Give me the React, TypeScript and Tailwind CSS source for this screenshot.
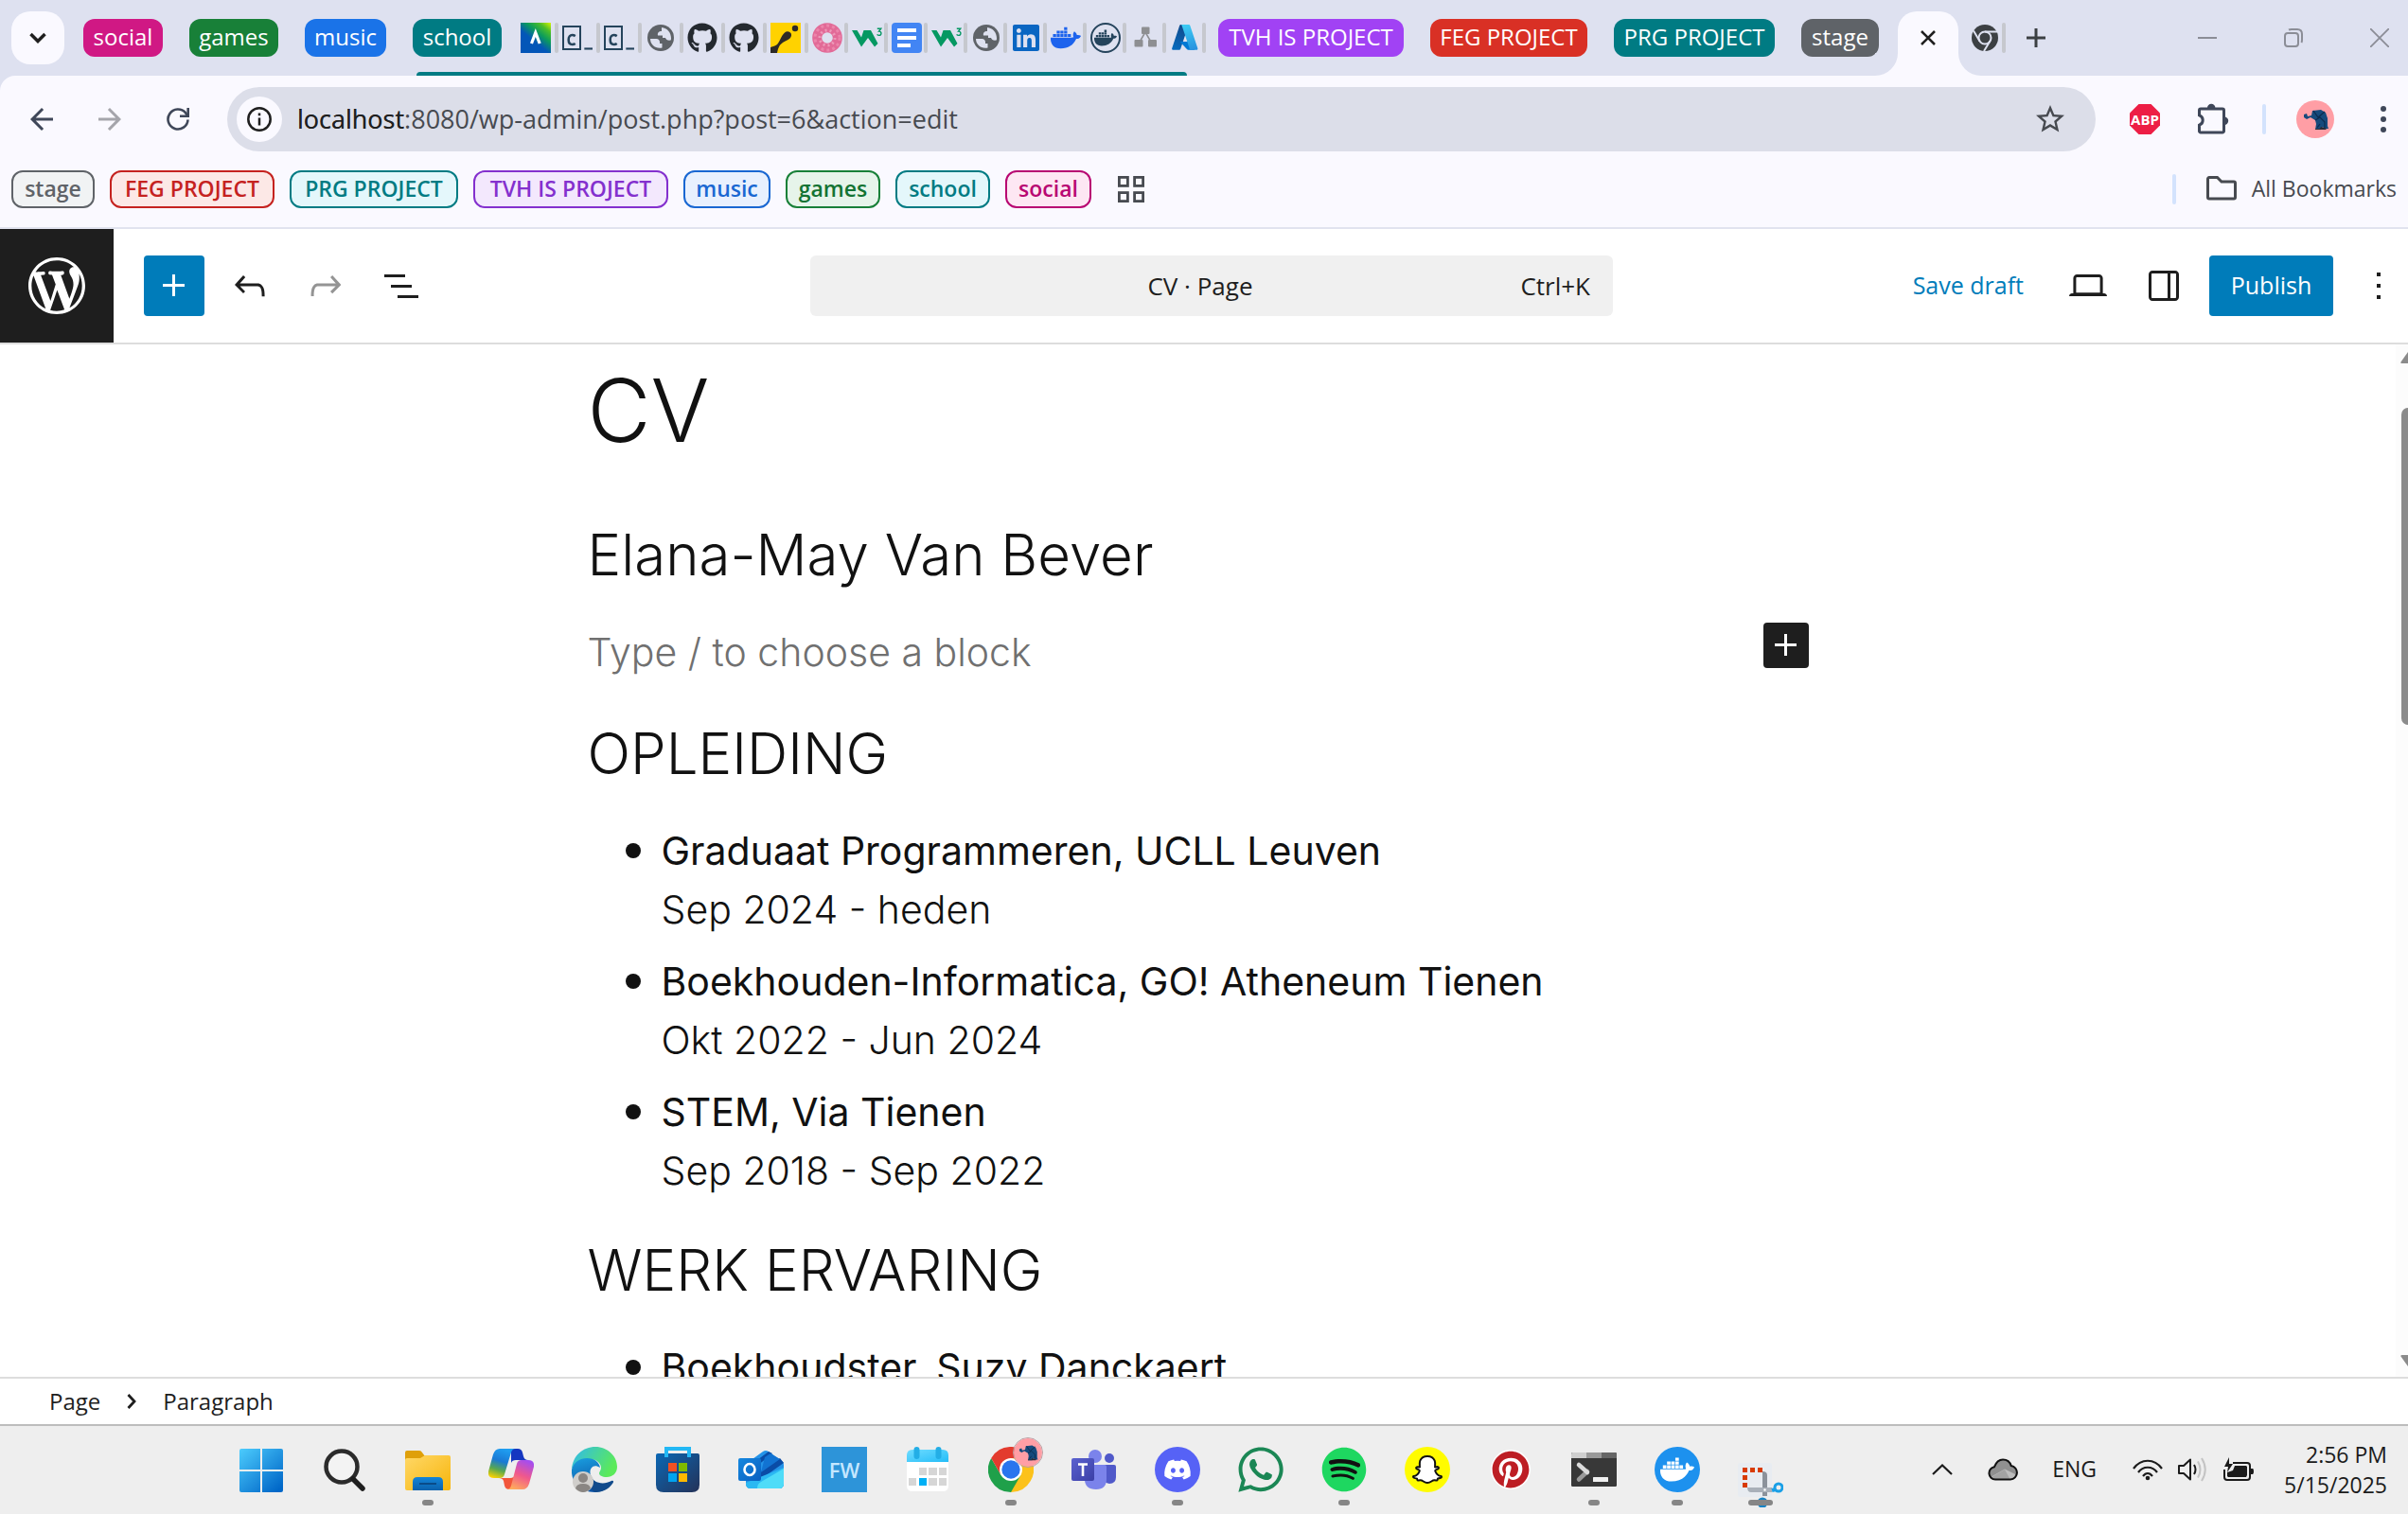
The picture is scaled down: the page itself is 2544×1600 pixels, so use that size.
import React from "react";
import { FaGithub, FaLinkedin, FaDocker, FaDiscord, FaWhatsapp, FaSpotify, FaPinterest, FaSnapchatGhost } from "react-icons/fa";
import { MdArrowBack, MdArrowForward, MdStarBorder } from "react-icons/md";

type SvgProps = { d: string; className?: string };

const WP = {
  undo: "M18.3 11.7c-.6-.6-1.4-.9-2.3-.9H6.7l2.9-3.3-1.1-1-4.5 5L8.5 16l1-1-2.7-2.7H16c.5 0 .9.2 1.3.5 1 1 1 3.4 1 4.5v.3h1.5v-.2c0-1.5 0-4.3-1.5-5.7z",
  redo: "M15.6 6.5l-1.1 1 2.9 3.3H8c-.9 0-1.7.3-2.3.9-1.4 1.5-1.4 4.2-1.4 5.6v.2h1.5v-.3c0-1.1 0-3.5 1-4.5.3-.3.7-.5 1.3-.5h9.2L14.5 15l1.1 1.1 4.6-4.6-4.6-5z",
  list: "M3 6h11v1.5H3V6Zm3.5 5.5h11V13h-11v-1.5ZM21 17H10v1.5h11V17Z",
  desktop: "M20.5 16h-.7V8c0-1.1-.9-2-2-2H6.2c-1.1 0-2 .9-2 2v8h-.7c-.8 0-1.5.7-1.5 1.5h20c0-.8-.7-1.5-1.5-1.5zM5.7 8c0-.3.2-.5.5-.5h11.6c.3 0 .5.2.5.5v7.6H5.7V8z",
  drawer: "M18 4H6c-1.1 0-2 .9-2 2v12c0 1.1.9 2 2 2h12c1.1 0 2-.9 2-2V6c0-1.1-.9-2-2-2zm-4 14.5H6c-.3 0-.5-.2-.5-.5V6c0-.3.2-.5.5-.5h8v13zm4.5-.5c0 .3-.2.5-.5.5h-2.5v-13H18c.3 0 .5.2.5.5v12z",
  more: "M13 19h-2v-2h2v2zm0-6h-2v-2h2v2zm0-6h-2V5h2v2z",
  plus: "M11 12.5V17.5H12.5V12.5H17.5V11H12.5V6H11V11H6V12.5H11Z",
  logo: "M20 10c0-5.51-4.49-10-10-10C4.48 0 0 4.49 0 10c0 5.52 4.48 10 10 10 5.51 0 10-4.48 10-10zM7.78 15.37L4.37 6.22c.55-.02 1.17-.08 1.17-.08.5-.06.44-1.13-.06-1.11 0 0-1.45.11-2.37.11-.18 0-.37 0-.58-.01C4.12 2.69 6.87 1.11 10 1.11c2.33 0 4.45.87 6.05 2.34-.68-.11-1.65.39-1.65 1.58 0 .74.45 1.36.9 2.1.35.61.55 1.36.55 2.46 0 1.49-1.4 5-1.4 5l-3.03-8.37c.54-.02.82-.17.82-.17.5-.05.44-1.25-.06-1.22 0 0-1.44.12-2.38.12-.87 0-2.33-.12-2.33-.12-.5-.03-.56 1.2-.06 1.22l.92.08 1.26 3.41zM17.41 10c.24-.64.74-1.87.43-4.25.7 1.29 1.05 2.71 1.05 4.25 0 3.29-1.73 6.24-4.4 7.78.97-2.59 1.94-5.2 2.92-7.78zM6.1 18.09C3.12 16.65 1.11 13.53 1.11 10c0-1.3.23-2.48.72-3.59C3.25 10.3 4.67 14.2 6.1 18.09zm4.03-6.63l2.58 6.98c-.86.29-1.76.45-2.71.45-.79 0-1.57-.11-2.29-.33.81-2.38 1.62-4.74 2.42-7.1z",
};

function WpIcon({ d, className = "" }: SvgProps) {
  return (
    <svg viewBox="0 0 24 24" className={`size-12 fill-current ${className}`} aria-hidden="true">
      <path d={d} />
    </svg>
  );
}

/* ---------- favicons ---------- */

function CodeFavicon() {
  return (
    <svg viewBox="0 0 24 24" className="size-8" fill="none" stroke="#25445c">
      <rect x="0.75" y="3" width="13.5" height="18" strokeWidth="1.5" />
      <path d="M10.3 10.6C9.5 10 8.8 9.8 7.9 9.8 6.3 9.8 5 11.200 5 13.500s1.200 3.700 2.900 3.700c1 0 1.700-.2 2.400-.7" strokeWidth="1.900" />
      <path d="M17.500 20.600h6.500" strokeWidth="1.600" />
    </svg>
  );
}

function CombellFavicon() {
  return (
    <svg viewBox="0 0 32 32" className="size-8">
      <defs>
        <linearGradient id="cfv" x1="1" y1="0" x2="0.350" y2="0.800">
          <stop offset="0" stopColor="#d8f500" />
          <stop offset="0.250" stopColor="#4bbd2a" />
          <stop offset="0.500" stopColor="#0c9c5c" />
          <stop offset="0.800" stopColor="#0356b8" />
        </linearGradient>
      </defs>
      <rect width="32" height="32" fill="url(#cfv)" />
      <path d="M11.500 22 15.800 10.500 20.200 22" fill="none" stroke="#fff" strokeWidth="3.200" />
    </svg>
  );
}

function Globe() {
  return (
    <svg viewBox="0 0 32 32" className="size-8">
      <circle cx="16" cy="16" r="14" fill="#5f6368" />
      <path d="M5 17h6.500c2 0 3.500 1.500 3.500 3.500V22h2.500v4.500C11 28 5 23.500 5 17z" fill="#dee1f0" />
      <path d="M17 5c6 .5 10 5.500 10 11.500 0 1-.1 1.500-.3 2-3 .5-5.200-.5-5.700-2.500h-3v-2.500h-5c-.6-2.500.8-4.500 4-4.500V7z" fill="#dee1f0" />
    </svg>
  );
}

function YellowFavicon() {
  return (
    <svg viewBox="0 0 32 32" className="size-8">
      <rect width="32" height="32" fill="#ffd200" />
      <circle cx="26" cy="6" r="3.200" fill="#2d2a26" />
      <path d="M0 32v-6c3-1.500 5-1 7-3 3-3 4-9 8-12.500 3-2.500 6-.5 6.800 1 .9 2-.3 5-3.300 6.500-4 2-7.500 3.500-9.500 7.500-1 2-1.500 4-2 6.500z" fill="#2d2a26" />
    </svg>
  );
}

function DonutFavicon() {
  return (
    <svg viewBox="0 0 32 32" className="size-8" fill="none">
      <circle cx="16" cy="16" r="10.800" stroke="#e26a97" strokeWidth="10" />
      <circle cx="16" cy="16" r="13" stroke="#ec85ab" strokeWidth="3" strokeDasharray="3 3" />
      <circle cx="16" cy="16" r="8" stroke="#ee9ab9" strokeWidth="3" strokeDasharray="2 3" />
    </svg>
  );
}

function W3Favicon() {
  return (
    <svg viewBox="0 0 32 32" className="size-8">
      <path d="M0 8h5.500l4.500 7.500L12.500 8H20l7.500 14-3.500 3.500L17 16l-7 9.500z" fill="#059862" />
      <path d="M26.800 6.200h4l-2.300 2.900c3.200 0 3.200 4.300.3 4.300-1 0-1.700-.4-2.200-1.100" fill="none" stroke="#059862" strokeWidth="1.400" />
    </svg>
  );
}

function DocsFavicon() {
  return (
    <svg viewBox="0 0 32 32" className="size-8">
      <rect width="32" height="32" rx="4" fill="#4285f4" />
      <path d="M6 8h20M6 16h20M6 24h14" stroke="#fff" strokeWidth="4" />
    </svg>
  );
}

function RoundDocker() {
  return (
    <span className="flex size-8 items-center justify-center rounded-full border-2 border-[#25445c] text-[#25445c]">
      <FaDocker className="size-6" />
    </span>
  );
}

function NodesFavicon() {
  return (
    <svg viewBox="0 0 32 32" className="size-8" fill="#8e8f92">
      <path d="M16 10 9 22M16 10l7 12" stroke="#8e8f92" strokeWidth="1.500" />
      <rect x="12" y="4.500" width="8.500" height="7.500" rx="1" />
      <rect x="4.500" y="18" width="9" height="7.500" rx="1" />
      <rect x="19" y="18" width="9" height="7.500" rx="1" />
    </svg>
  );
}

function AzureFavicon() {
  return (
    <svg viewBox="0 0 32 32" className="size-8">
      <defs>
        <linearGradient id="az1" x1="0.600" y1="0" x2="0.300" y2="1">
          <stop offset="0" stopColor="#114a8b" />
          <stop offset="1" stopColor="#0669bc" />
        </linearGradient>
        <linearGradient id="az2" x1="0.400" y1="0" x2="0.600" y2="1">
          <stop offset="0" stopColor="#3ccbf4" />
          <stop offset="1" stopColor="#2892df" />
        </linearGradient>
      </defs>
      <path d="M11.500 2h8.300l-8.600 25.800c-.2.600-.7 1-1.300 1H3.500c-1 0-1.700-1-1.300-1.900L10.200 3c.2-.6.700-1 1.300-1z" fill="url(#az1)" />
      <path d="M23 20H10.500l7.700 8.200c.3.300.7.500 1.100.5h6.800z" fill="#0078d4" />
      <path d="M21.300 3c-.2-.6-.7-1-1.300-1h-8.700c.6 0 1.100.4 1.300 1l8 23.900c.3.900-.3 1.900-1.300 1.900H28c1 0 1.600-1 1.300-1.900z" fill="url(#az2)" />
    </svg>
  );
}

/* ---------- browser chrome ---------- */

const groupsLeft = [
  { label: "social", cls: "w-[84px] bg-[#d01884]" },
  { label: "games", cls: "w-[94px] bg-[#188038]" },
  { label: "music", cls: "w-[86px] bg-[#1a73e8]" },
];
const groupsRight = [
  { label: "TVH IS PROJECT", cls: "w-[196px] bg-[#a142f4]" },
  { label: "FEG PROJECT", cls: "w-[166px] bg-[#d93025]" },
  { label: "PRG PROJECT", cls: "w-[170px] bg-[#007b83]" },
  { label: "stage", cls: "w-[82px] bg-[#5f6368]" },
];

function GroupPill({ label, cls }: { label: string; cls: string }) {
  return (
    <button className={`h-10 shrink-0 rounded-xl pb-0.5 text-2xl leading-9 whitespace-nowrap text-white ${cls}`}>{label}</button>
  );
}

const wideTabs: [string, React.ReactNode][] = [
  ["Combell", <CombellFavicon />],
  ["Codio", <CodeFavicon />],
  ["Codio 2", <CodeFavicon />],
  ["Local site", <Globe />],
  ["GitHub", <FaGithub className="size-8 text-[#24292f]" />],
  ["GitHub 2", <FaGithub className="size-8 text-[#24292f]" />],
  ["Toledo", <YellowFavicon />],
];
const narrowTabs: [string, React.ReactNode][] = [
  ["Donut", <DonutFavicon />],
  ["W3Schools", <W3Favicon />],
  ["Docs", <DocsFavicon />],
  ["W3Schools 2", <W3Favicon />],
  ["Local site 2", <Globe />],
  ["LinkedIn", <FaLinkedin className="size-8 text-[#0a66c2]" />],
  ["Docker", <FaDocker className="size-8 text-[#1d63ed]" />],
  ["Docker Docs", <RoundDocker />],
  ["Diagram", <NodesFavicon />],
  ["Azure", <AzureFavicon />],
];

function Separator() {
  return <span className="h-8 w-1 shrink-0 rounded-full bg-[#c6c8ce]" />;
}

function TabStrip() {
  return (
    <div className="flex h-20 items-center bg-[#dee1f0] pl-3">
      <button aria-label="Search tabs" className="flex size-14 shrink-0 items-center justify-center rounded-[20px] bg-[#faf9ff]">
        <svg viewBox="0 0 24 24" className="size-6" fill="none" stroke="#1f1f1f" strokeWidth="3.500">
          <path d="M4.500 8 12 15.500 19.500 8" />
        </svg>
      </button>
      <div className="ml-5 flex gap-7">
        {groupsLeft.map((g) => (
          <GroupPill key={g.label} {...g} />
        ))}
      </div>
      <div className="relative ml-7 flex h-20 items-center">
        <GroupPill label="school" cls="w-[94px] bg-[#007b83]" />
        <div className="ml-5 flex">
          {wideTabs.map(([name, icon]) => (
            <button key={name} aria-label={name} className="flex w-11 items-center gap-1">
              {icon}
              <Separator />
            </button>
          ))}
          {narrowTabs.map(([name, icon]) => (
            <button key={name} aria-label={name} className="flex w-[42px] items-center gap-[2px]">
              <span className="flex w-8 shrink-0 justify-center">{icon}</span>
              <Separator />
            </button>
          ))}
        </div>
        <span className="absolute right-6 bottom-0 left-1 h-1 rounded-t-sm bg-[#007b83]" />
      </div>
      <div className="ml-[9px] flex gap-7">
        {groupsRight.map((g) => (
          <GroupPill key={g.label} {...g} />
        ))}
      </div>
      <div className="relative ml-5 flex h-[68px] w-16 shrink-0 items-center justify-center self-end rounded-t-[20px] bg-[#faf9ff] pb-3">
        <span className="absolute bottom-0 -left-6 size-6 bg-[#faf9ff]">
          <span className="block size-6 rounded-br-full bg-[#dee1f0]" />
        </span>
        <span className="absolute -right-6 bottom-0 size-6 bg-[#faf9ff]">
          <span className="block size-6 rounded-bl-full bg-[#dee1f0]" />
        </span>
        <button aria-label="Close tab">
          <svg viewBox="0 0 16 16" className="size-4" stroke="#1f1f1f" strokeWidth="2.600">
            <path d="M1 1l14 14M15 1 1 15" />
          </svg>
        </button>
      </div>
      <button aria-label="Chrome tab" className="ml-[14px] flex items-center gap-1">
        <svg viewBox="0 0 28 28" className="size-7">
          <circle cx="14" cy="14" r="14" fill="#3c4043" />
          <circle cx="14" cy="14" r="6.500" fill="none" stroke="#dee1f0" strokeWidth="2" />
          <path d="M14 7.500h13M8.500 17.500 2 6.500M19.500 17.300 13 28" stroke="#dee1f0" strokeWidth="2" />
        </svg>
        <Separator />
      </button>
      <button aria-label="New tab" className="ml-[22px]">
        <svg viewBox="0 0 20 20" className="size-5" stroke="#3c4043" strokeWidth="3">
          <path d="M10 0v20M0 10h20" />
        </svg>
      </button>
      <div className="mr-5 ml-auto flex items-center gap-[71px]">
        <button aria-label="Minimize">
          <svg viewBox="0 0 20 20" className="size-5" stroke="#8b8d96" strokeWidth="2">
            <path d="M0 10h20" />
          </svg>
        </button>
        <button aria-label="Restore">
          <svg viewBox="0 0 20 20" className="size-5" fill="none" stroke="#8b8d96" strokeWidth="2">
            <rect x="1" y="5" width="14" height="14" rx="3" />
            <path d="M5 1.500C6 1 6.500 1 8 1h6c3 0 5 2 5 5v6c0 1.500 0 2-.6 3" />
          </svg>
        </button>
        <button aria-label="Close window">
          <svg viewBox="0 0 20 20" className="size-5" stroke="#8b8d96" strokeWidth="1.800">
            <path d="M0 0l20 20M20 0 0 20" />
          </svg>
        </button>
      </div>
    </div>
  );
}

function Elephant({ className }: { className: string }) {
  return (
    <svg viewBox="0 0 40 40" className={className}>
      <circle cx="20" cy="20" r="20" fill="#ff9ea5" />
      <path d="M8 15l3-1 1 3 4-1 1-5 9-1 5 3 2 6v8l1 3h-5l-1-2-2 3h-6l1-6-1-4-5-3-4 2-3-2z" fill="#164a7c" />
      <path d="M18 11l5 7 7-6M20 21l5-3 5 5v6M22 29l3-4" fill="none" stroke="#0c2c50" strokeWidth="1.200" />
      <path d="M20 30h5l1-2 6 2-1 1H20z" fill="#2b2b35" />
    </svg>
  );
}

function Toolbar() {
  return (
    <div className="bg-[#dee1f0]">
      <div className="flex h-[92px] items-center rounded-tl-2xl bg-[#faf9ff] pl-2">
        <button aria-label="Back" className="flex w-[72px] justify-center text-[#3f4759]">
          <MdArrowBack className="size-9" />
        </button>
        <button aria-label="Forward" className="flex w-[72px] justify-center text-[#a5a5ab]">
          <MdArrowForward className="size-9" />
        </button>
        <button aria-label="Reload" className="flex w-[72px] justify-center">
          <svg viewBox="0 0 24 24" className="size-6" fill="none" stroke="#3f4759" strokeWidth="2.600">
            <path d="M22.500 12.500A10.500 10.500 0 1 1 20 5.200l2 2.800" />
            <path d="M22.700 0v8.700H14" />
          </svg>
        </button>
        <div className="ml-4 flex h-[68px] flex-1 items-center rounded-full bg-[#dcdee9] pr-[30px] pl-[10px]">
          <button aria-label="Site information" className="flex size-12 items-center justify-center rounded-full bg-[#faf9ff]">
            <svg viewBox="0 0 26 26" className="size-[26px]" fill="none" stroke="#1f1f1f" strokeWidth="2.500">
              <circle cx="13" cy="13" r="11.700" />
              <path d="M13 11.500v8M13 6.500v2.700" />
            </svg>
          </button>
          <div className="relative ml-4 flex-1">
            <input
              aria-label="Address"
              defaultValue="localhost:8080/wp-admin/post.php?post=6&action=edit"
              className="block w-full bg-transparent text-[27px] leading-10 text-[#474a50] outline-none"
            />
            <span aria-hidden="true" className="pointer-events-none absolute top-0 left-0 text-[27px] leading-10 text-[#1f1f1f]">
              localhost
            </span>
          </div>
          <button aria-label="Bookmark this tab">
            <MdStarBorder className="size-9 text-[#474a50]" />
          </button>
        </div>
        <button aria-label="Adblock Plus" className="ml-4 flex w-[72px] justify-center">
          <svg viewBox="0 0 32 32" className="size-8">
            <path d="M9.500 0h13L32 9.500v13L22.500 32h-13L0 22.500v-13z" fill="#ed1e45" />
            <text x="16" y="21.500" textAnchor="middle" fontSize="15" fontWeight="700" fill="#fff">
              ABP
            </text>
          </svg>
        </button>
        <button aria-label="Extensions" className="flex w-[72px] justify-center">
          <svg viewBox="0 0 34 34" className="size-[34px]" fill="none">
            <path
              d="M4 6h23a1.500 1.500 0 0 1 1.500 1.500v22A1.500 1.500 0 0 1 27 31H4a1.500 1.500 0 0 1-1.500-1.500v-6.300a5.500 5.500 0 0 0 0-10.400V7.500A1.500 1.500 0 0 1 4 6z"
              stroke="#3f4759"
              strokeWidth="3"
            />
            <path d="M11 5a4.200 4.200 0 0 1 8.400 0zM29 14.500a4.200 4.200 0 0 1 0 8.400z" fill="#3f4759" />
          </svg>
        </button>
        <span className="mx-4 h-8 w-1 rounded-full bg-[#d3e3fd]" />
        <button aria-label="Profile" className="flex w-[72px] justify-center">
          <Elephant className="size-10" />
        </button>
        <button aria-label="Chrome menu" className="mr-[2px] ml-3 flex w-12 justify-center">
          <svg viewBox="0 0 6 28" className="h-7 w-[6px]" fill="#3f4759">
            <circle cx="3" cy="3" r="3" />
            <circle cx="3" cy="14" r="3" />
            <circle cx="3" cy="25" r="3" />
          </svg>
        </button>
      </div>
    </div>
  );
}

const bookmarks = [
  { label: "stage", cls: "w-[88px] border-[#5f6368] bg-[#f1f3f4] text-[#5f6368]" },
  { label: "FEG PROJECT", cls: "w-[174px] border-[#c5221f] bg-[#fce8e6] text-[#c5221f]" },
  { label: "PRG PROJECT", cls: "w-[178px] border-[#007b83] bg-[#e4f7fb] text-[#007b83]" },
  { label: "TVH IS PROJECT", cls: "w-[206px] border-[#8430ce] bg-[#f3e8fd] text-[#8430ce]" },
  { label: "music", cls: "w-[92px] border-[#1967d2] bg-[#e8f0fe] text-[#1967d2]" },
  { label: "games", cls: "w-[100px] border-[#188038] bg-[#e6f4ea] text-[#137333]" },
  { label: "school", cls: "w-[100px] border-[#007b83] bg-[#e4f7fb] text-[#007b83]" },
  { label: "social", cls: "w-[91px] border-[#b80672] bg-[#fde7f3] text-[#b80672]" },
];

function BookmarksBar() {
  return (
    <div className="flex h-[70px] items-center gap-4 border-b-2 border-[#e1e3ef] bg-[#faf9ff] pb-3 pl-3">
      {bookmarks.map((b) => (
        <button key={b.label} className={`h-10 rounded-xl border-2 pb-0.5 text-[23px] leading-8 font-semibold whitespace-nowrap ${b.cls}`}>
          {b.label}
        </button>
      ))}
      <button aria-label="Tab groups" className="ml-3">
        <svg viewBox="0 0 28 28" className="size-7" fill="none" stroke="#474a50" strokeWidth="2.800">
          <rect x="1.400" y="1.400" width="9" height="9" />
          <rect x="17.600" y="1.400" width="9" height="9" />
          <rect x="1.400" y="17.600" width="9" height="9" />
          <rect x="17.600" y="17.600" width="9" height="9" />
        </svg>
      </button>
      <span className="ml-auto h-8 w-1 rounded-full bg-[#d3e3fd]" />
      <button className="mr-3 ml-4 flex items-center gap-4 pb-0.5 text-[23px] leading-8 text-[#474a50]">
        <svg viewBox="0 0 32 26" className="h-[26px] w-8" fill="none" stroke="#474a50" strokeWidth="3">
          <path d="M3 1.500h8.500l4.500 4.500h13A1.500 1.500 0 0 1 30.500 7.500v15A1.500 1.500 0 0 1 29 24H3a1.500 1.500 0 0 1-1.500-1.500V3A1.500 1.500 0 0 1 3 1.500z" />
        </svg>
        All Bookmarks
      </button>
    </div>
  );
}

/* ---------- WordPress editor ---------- */

function EditorHeader() {
  return (
    <header className="flex h-[122px] items-center justify-between border-b-2 border-[#dddddd] bg-white">
      <div className="flex flex-1 items-center self-stretch">
        <a href="#dashboard" aria-label="View Pages" className="flex w-[120px] items-center justify-center self-stretch bg-[#1e1e1e] text-white">
          <svg viewBox="-2 -2 24 24" className="size-[72px] fill-current">
            <path d={WP.logo} />
          </svg>
        </a>
        <button aria-label="Toggle block inserter" className="ml-8 flex size-16 items-center justify-center rounded-sm bg-[#007cba] text-white">
          <WpIcon d={WP.plus} />
        </button>
        <button aria-label="Undo" className="ml-4 flex w-16 justify-center text-[#1e1e1e]">
          <WpIcon d={WP.undo} />
        </button>
        <button aria-label="Redo" className="ml-4 flex w-16 justify-center text-[#949494]">
          <WpIcon d={WP.redo} />
        </button>
        <button aria-label="Document overview" className="ml-4 flex w-16 justify-center text-[#1e1e1e]">
          <WpIcon d={WP.list} />
        </button>
      </div>
      <button className="ml-4 grid h-16 w-1/3 grid-cols-[1fr_auto_1fr] items-center rounded-md bg-[#f0f0f0] px-6 text-[26px] text-[#1e1e1e]">
        <span className="col-start-2 mr-6">CV · Page</span>
        <span className="text-right">Ctrl+K</span>
      </button>
      <div className="flex flex-1 items-center justify-end text-[25px]">
        <button className="mr-9 text-[#007cba]">Save draft</button>
        <button aria-label="View" className="flex w-16 justify-center text-[#1e1e1e]">
          <WpIcon d={WP.desktop} />
        </button>
        <button aria-label="Settings" className="ml-4 flex w-16 justify-center text-[#1e1e1e]">
          <WpIcon d={WP.drawer} />
        </button>
        <button className="ml-4 h-16 w-[131px] rounded-sm bg-[#007cba] text-white">Publish</button>
        <button aria-label="Options" className="ml-4 flex w-[63px] justify-center text-[#1e1e1e]">
          <WpIcon d={WP.more} />
        </button>
      </div>
    </header>
  );
}

const education = [
  ["Graduaat Programmeren, UCLL Leuven", "Sep 2024 - heden"],
  ["Boekhouden-Informatica, GO! Atheneum Tienen", "Okt 2022 - Jun 2024"],
  ["STEM, Via Tienen", "Sep 2018 - Sep 2022"],
];

function Entry({ title, period }: { title: string; period: string }) {
  return (
    <li className="flex gap-[22px]">
      <span className="flex h-[62px] items-center">
        <span className="size-4 rounded-full bg-[#111111]" />
      </span>
      <div>
        <div className="font-normal">{title}</div>
        <div>{period}</div>
      </div>
    </li>
  );
}

function Canvas() {
  return (
    <main className="flex min-h-0 flex-1 overflow-hidden bg-white">
      <div className="flex-1 overflow-hidden">
        <article className="mx-auto w-[1290px] max-w-full pt-4 font-['Inter',sans-serif] text-[41px] leading-[62px] font-light text-[#111111]">
          <h1 className="text-[92px] leading-[108px] font-[350]">CV</h1>
          <h2 className="mt-[62px] text-[60px] leading-[72px] font-[350]">Elana-May Van Bever</h2>
          <div className="mt-9 flex items-start justify-between">
            <p className="text-[#707070]">Type / to choose a block</p>
            <button aria-label="Add block" className="flex size-12 items-center justify-center rounded-sm bg-[#1e1e1e] text-white">
              <WpIcon d={WP.plus} />
            </button>
          </div>
          <h2 className="mt-10 text-[60px] leading-[72px] font-[350]">OPLEIDING</h2>
          <ul className="mt-9 flex flex-col gap-[14px] pl-10">
            {education.map(([title, period]) => (
              <Entry key={title} title={title} period={period} />
            ))}
          </ul>
          <h2 className="mt-[38px] text-[60px] leading-[72px] font-[350]">WERK ERVARING</h2>
          <ul className="mt-9 pl-10">
            <Entry title="Boekhoudster, Suzy Danckaert" period="" />
          </ul>
        </article>
      </div>
      <div className="flex w-[13px] flex-col items-end justify-between overflow-hidden bg-[#fcfcfc]">
        <svg viewBox="0 0 8 12" className="mt-2 h-3 w-2" fill="#8b8b8b">
          <path d="M8 0v12H1.500Q0 12 .5 10.500z" />
        </svg>
        <span className="mt-[47px] h-[335px] w-[7px] rounded-l-full bg-[#8b8b8b]" />
        <span className="flex-1" />
        <svg viewBox="0 0 8 12" className="mb-[11px] h-3 w-2" fill="#8b8b8b">
          <path d="M8 12V0H1.500Q0 0 .5 1.500z" />
        </svg>
      </div>
    </main>
  );
}

function Breadcrumb() {
  return (
    <nav aria-label="Block breadcrumb" className="flex h-[52px] items-center border-y-2 border-t-[#dddddd] border-b-[#bdbdbd] bg-white pl-[52px] text-[24px] text-[#1e1e1e]">
      <button>Page</button>
      <svg viewBox="0 0 10 16" className="mx-7 h-4 w-[10px]" fill="none" stroke="#1e1e1e" strokeWidth="2.800">
        <path d="M1.500 1l6.500 7-6.500 7" />
      </svg>
      <button>Paragraph</button>
    </nav>
  );
}

/* ---------- taskbar ---------- */

function Art({ children }: { children: React.ReactNode }) {
  return (
    <svg viewBox="0 0 48 48" className="size-12">
      {children}
    </svg>
  );
}

function Grad({ id, from, to, x2 = "1", y2 = "1" }: { id: string; from: string; to: string; x2?: string; y2?: string }) {
  return (
    <linearGradient id={id} x1="0" y1="0" x2={x2} y2={y2}>
      <stop offset="0" stopColor={from} />
      <stop offset="1" stopColor={to} />
    </linearGradient>
  );
}

const apps: { name: string; art: React.ReactNode; mark?: string }[] = [
  {
    name: "Start",
    art: (
      <Art>
        <defs>
          <linearGradient id="win" gradientUnits="userSpaceOnUse" x1="0" y1="0" x2="42" y2="46">
            <stop offset="0" stopColor="#4fd0ff" />
            <stop offset="1" stopColor="#0067c8" />
          </linearGradient>
        </defs>
        <path d="M3 2h20v22H1V4q0-2 2-2zM25 2h20q2 0 2 2v20H25zM1 26h22v22H3q-2 0-2-2zM25 26h22v20q0 2-2 2H25z" fill="url(#win)" />
      </Art>
    ),
  },
  {
    name: "Search",
    art: (
      <Art>
        <circle cx="21" cy="21" r="16.500" fill="#f3f3f3" stroke="#2b2b2b" strokeWidth="4.500" />
        <path d="M33 34l10 10" stroke="#1f1f1f" strokeWidth="5.500" strokeLinecap="round" />
      </Art>
    ),
  },
  {
    name: "File Explorer",
    mark: "w-3",
    art: (
      <Art>
        <defs>
          <Grad id="fld" from="#ffd867" to="#f7b50c" />
          <Grad id="fldb" from="#1384d8" to="#0b61ac" x2="0" />
        </defs>
        <path d="M0 12V6q0-2 2-2h13q2 0 3 2l3 4v4H0z" fill="#dfa00a" />
        <path d="M0 14q0-2 2-2h14l5-3h25q2 0 2 2v33q0 2-2 2H2q-2 0-2-2z" fill="url(#fld)" />
        <path d="M8 46V37q0-5 5-5h22q5 0 5 5v9z" fill="url(#fldb)" />
        <path d="M15 39h18" stroke="#0a4b88" strokeWidth="2" />
      </Art>
    ),
  },
  {
    name: "Copilot",
    art: (
      <Art>
        <defs>
          <linearGradient id="cpa" x1="0.500" y1="0" x2="0.200" y2="1">
            <stop offset="0" stopColor="#1f9df0" />
            <stop offset="0.400" stopColor="#1a79d4" />
            <stop offset="0.700" stopColor="#5aa84e" />
            <stop offset="1" stopColor="#ffd400" />
          </linearGradient>
          <linearGradient id="cpb" x1="0.700" y1="0" x2="0.300" y2="1">
            <stop offset="0" stopColor="#a44df0" />
            <stop offset="0.500" stopColor="#f0588c" />
            <stop offset="1" stopColor="#ffab5c" />
          </linearGradient>
        </defs>
        <path d="M24 2h7q4 0 5 4l1 4q1 4 5 4H29q-4 0-5 3z" fill="#1436c0" />
        <path d="M24 45h-2q-4 0-5-4l-1-5q-1-3-5-3h12q4 0 6-4z" fill="#f2553a" />
        <path d="M12 2h17q-4 0-5 4l-7 23q-1 4-5 4H6q-7 0-6-7L5 8q2-6 7-6z" fill="url(#cpa)" />
        <path d="M36 45H19q4 0 5-4l6-23q1-4 5-4h7q7 0 6 7l-5 18q-2 6-7 6z" fill="url(#cpb)" />
      </Art>
    ),
  },
  {
    name: "Edge",
    art: (
      <Art>
        <defs>
          <Grad id="eda" from="#2fb8f0" to="#5bea5a" y2="0.400" />
          <Grad id="edb" from="#1a9fe0" to="#0b52a4" x2="0.300" />
        </defs>
        <path d="M0 24C1 9 12 0 25 0c13 0 23 10 23 21 0 7-5 11-11 11-5 0-8-2-8-4s2-3 2-6c0-4-4-9-12-9C10 13 2 18 0 24z" fill="url(#eda)" />
        <path d="M0 24c2-8 9-12 16-12 8 0 13 4 14 10-8-5-12 2-10 8 2 7 11 13 22 8-4 6-10 10-18 10C9 48-1 37 0 24z" fill="url(#edb)" />
        <path d="M20 30c2 8 13 11 22 6 2-1 3 1 1 3-4 6-11 9-18 9-6-3-8-10-5-18z" fill="#114a8b" />
        <circle cx="12" cy="37" r="11" fill="#d0cecb" />
        <circle cx="12" cy="33" r="5" fill="#8a8683" />
        <path d="M4 44q1-5 8-5t8 5q-4 4-8 4t-8-4z" fill="#8a8683" />
      </Art>
    ),
  },
  {
    name: "Microsoft Store",
    art: (
      <Art>
        <defs>
          <Grad id="sto" from="#0b67b4" to="#243258" />
        </defs>
        <path d="M1 9q0-2 2-2h42q2 0 2 2v31q0 8-8 8H9q-8 0-8-8z" fill="url(#sto)" />
        <path d="M12 11V2h24v9" fill="none" stroke="#22b8f5" strokeWidth="4" />
        <path d="M14 17h9v9h-9z" fill="#f25022" />
        <path d="M25 17h9v9h-9z" fill="#7fba00" />
        <path d="M14 28h9v9h-9z" fill="#00a4ef" />
        <path d="M25 28h9v9h-9z" fill="#ffb900" />
      </Art>
    ),
  },
  {
    name: "Outlook",
    art: (
      <Art>
        <defs>
          <Grad id="otl" from="#1488e0" to="#0a5fc0" />
        </defs>
        <path d="M8 18 26 5q3-2 6 0l14 10q2 1 2 4v20q0 5-5 5H13q-5 0-5-5z" fill="#2493e8" />
        <path d="M20 14 32 5l4 2-16 13zM48 17 24 34v-8l20-14z" fill="#0a4ca6" />
        <path d="M28 11 34 7l10 6-20 14z" fill="#1273d2" />
        <path d="M8 38 48 22v17q0 5-5 5H13q-5 0-5-5z" fill="#2bb8f2" />
        <path d="M20 44q0-5 4-7l24-14v16q0 5-5 5z" fill="#4fdcf8" />
        <rect x="0" y="12" width="24" height="24" rx="2" fill="url(#otl)" />
        <ellipse cx="12" cy="24" rx="5.500" ry="6" fill="none" stroke="#fff" strokeWidth="2.600" />
      </Art>
    ),
  },
  {
    name: "FW",
    art: <span className="flex size-12 items-center justify-center bg-[#2d94d9] text-[22px] leading-none font-semibold text-[#c5e7ff]">FW</span>,
  },
  {
    name: "Calendar",
    art: (
      <Art>
        <defs>
          <Grad id="cal" from="#6fdcff" to="#24bdf8" />
        </defs>
        <path d="M2 14h44v27q0 6-6 6H8q-6 0-6-6z" fill="#fff" />
        <path d="M2 16V9q0-6 6-6h32q6 0 6 6v7z" fill="url(#cal)" />
        <path d="M12.500 3v7M35.500 3v7" stroke="#23aee6" strokeWidth="6" strokeLinecap="round" />
        <path d="M15 22h8v8h-8zM25 22h9v8h-9zM36 22h8v8h-8zM4 33h8v8H4zM25 33h9v8h-9zM36 33h8v8h-8z" fill="#d6d6d6" />
        <path d="M15 33h8v8h-8z" fill="#00b0f5" />
      </Art>
    ),
  },
  {
    name: "Chrome",
    mark: "w-3",
    art: (
      <span className="relative block size-12">
        <Art>
          <path d="M24 12h20.800a24 24 0 0 1-20.800 36z" fill="#fcc21b" />
          <path d="M24 24l10.400 6L24 48A24 24 0 0 1 3.200 12l10.400 18z" fill="#1fa04a" />
          <path d="M24 12h20.800A24 24 0 0 0 3.200 12l10.400 18z" fill="#e33b2e" />
          <circle cx="24" cy="24" r="12" fill="#fff" />
          <circle cx="24" cy="24" r="9.700" fill="#2a75ee" />
        </Art>
        <Elephant className="absolute -top-[10px] -right-[10px] size-8 rounded-full border border-[#b9a0a4]" />
      </span>
    ),
  },
  {
    name: "Teams",
    art: (
      <Art>
        <defs>
          <Grad id="tms" from="#5b62d0" to="#3b3fa6" />
        </defs>
        <circle cx="40" cy="12" r="5" fill="#5059c9" />
        <path d="M34 19h11q2 0 2 2v11q0 7-7 7-3 0-6-3z" fill="#5059c9" />
        <circle cx="25" cy="10" r="7" fill="#7b83eb" />
        <path d="M14 19h21q2 0 2 2v13q0 11-11 11-12 0-12-11z" fill="#7b83eb" />
        <rect x="0" y="12" width="24" height="24" rx="2" fill="url(#tms)" />
        <path d="M7 18.500h10M12 18.500V31" stroke="#fff" strokeWidth="2.600" />
      </Art>
    ),
  },
  {
    name: "Discord",
    mark: "w-3",
    art: (
      <span className="flex size-12 items-center justify-center rounded-full bg-[#5662f6] text-white">
        <FaDiscord className="size-[30px]" />
      </span>
    ),
  },
  { name: "WhatsApp", art: <FaWhatsapp className="size-[54px] text-[#1b8755]" /> },
  {
    name: "Spotify",
    mark: "w-3",
    art: (
      <span className="relative flex size-12 items-center justify-center">
        <span className="absolute inset-1 rounded-full bg-[#111111]" />
        <FaSpotify className="relative size-12 text-[#1ed760]" />
      </span>
    ),
  },
  {
    name: "Snapchat",
    art: (
      <span className="flex size-12 items-center justify-center rounded-full bg-[#fffc00]">
        <FaSnapchatGhost className="size-[30px] overflow-visible text-white" stroke="#111" strokeWidth="34" />
      </span>
    ),
  },
  {
    name: "Pinterest",
    art: (
      <span className="flex size-[42px] items-center justify-center rounded-full bg-white">
        <FaPinterest className="size-10 text-[#bd1e24]" />
      </span>
    ),
  },
  {
    name: "Terminal",
    mark: "w-3",
    art: (
      <Art>
        <rect y="6" width="48" height="36" rx="1.500" fill="#383838" />
        <path d="M0 12V7.500Q0 6 1.500 6H16v6z" fill="#cfcfcf" />
        <path d="M16 6h16v6H16z" fill="#999" />
        <path d="M32 6h14.500q1.500 0 1.500 1.500V12H32z" fill="#666" />
        <path d="M8 34.500l9-8.500" stroke="#9a9a9a" strokeWidth="4.500" strokeLinecap="round" />
        <path d="M8 19l9 8" stroke="#dcdcdc" strokeWidth="4.500" strokeLinecap="round" />
        <rect x="23" y="32" width="16" height="5" rx="0.500" fill="#f0f0f0" />
      </Art>
    ),
  },
  {
    name: "Docker Desktop",
    mark: "w-3",
    art: (
      <span className="flex size-12 items-center justify-center rounded-full bg-[#1d91ee] text-white">
        <FaDocker className="size-9" />
      </span>
    ),
  },
  {
    name: "Snipping Tool",
    mark: "w-[26px]",
    art: (
      <svg viewBox="0 0 48 48" className="mt-8 size-12">
        <rect x="0" y="1" width="36" height="36" rx="2" fill="#e8ecf1" />
        <path d="M5 6h5v5H5zM13 6h5v5h-5zM21 6h5v5h-5zM5 14h5v5H5zM5 22h5v5H5z" fill="#d83b01" />
        <path d="M26 10q5 0 5 4v22h-5z" fill="#8b929b" />
        <path d="M10 27h26v5H14q-4 0-4-5z" fill="#a9b0b9" />
        <circle cx="43" cy="27" r="4" fill="none" stroke="#1a9fe6" strokeWidth="3" />
        <path d="M36 30l4-1" stroke="#1a9fe6" strokeWidth="4" />
        <circle cx="26" cy="43" r="4" fill="none" stroke="#1583c5" strokeWidth="3" />
        <circle cx="28.500" cy="29.500" r="1.200" fill="#fff" />
      </svg>
    ),
  },
];

function Taskbar() {
  return (
    <footer className="flex h-[93px] items-center bg-[#eeeeee] pb-0.5 pl-[232px] text-[#1b1b1b]">
      <div className="flex self-stretch">
        {apps.map((a) => (
          <button key={a.name} aria-label={a.name} className="relative flex w-[88px] items-center justify-center">
            {a.art}
            {a.mark && (
              <span className="absolute inset-x-0 bottom-[7px] flex justify-center">
                <span className={`h-[6px] rounded-full bg-[#868686] ${a.mark}`} />
              </span>
            )}
          </button>
        ))}
      </div>
      <div className="mr-[22px] ml-auto flex items-center">
        <button aria-label="Show hidden icons">
          <svg viewBox="0 0 22 12" className="h-3 w-[22px]" fill="none" stroke="#1b1b1b" strokeWidth="2.200">
            <path d="M1 11 11 1.500 21 11" />
          </svg>
        </button>
        <button aria-label="OneDrive" className="ml-[37px]">
          <svg viewBox="0 0 32 24" className="h-6 w-8">
            <path d="M8 23a7 7 0 0 1-1-13.800C9 4 12.500 1.500 16 1.500c4.500 0 7.500 2.500 8.700 6.500A7.500 7.500 0 0 1 24 23z" fill="#909090" />
            <path d="M3 20l15-8.500L29 17q-1 6-5 6H8q-4 0-5-3z" fill="#bdbdbd" />
            <path d="M4 20l14-8 6 11H8q-3 0-4-3z" fill="#a3a3a3" />
            <path d="M8 22.500a6.700 6.700 0 0 1-1-13.300C9 4 12.500 1.500 16 1.500c4.500 0 7.500 2.500 8.700 6.500A7.300 7.300 0 0 1 24 22.500z" fill="none" stroke="#111" strokeWidth="2" />
          </svg>
        </button>
        <button aria-label="Input language" className="ml-9 text-[23px]">
          ENG
        </button>
        <button aria-label="Network, sound and battery" className="ml-[38px] flex items-center gap-4">
          <svg viewBox="0 0 32 24" className="h-6 w-8" fill="none" stroke="#1b1b1b" strokeWidth="2.200">
            <path d="M1 11C9 0 23 0 31 11M6 15c5-7 15-7 20 0M11 19c3-4 7-4 10 0" />
            <circle cx="16" cy="21" r="2.300" fill="#1b1b1b" stroke="none" />
          </svg>
          <svg viewBox="0 0 32 28" className="h-7 w-8" fill="none" stroke="#1b1b1b" strokeWidth="2">
            <path d="M1 10h5l7-6.500v21L6 18H1z" strokeLinejoin="round" />
            <path d="M17 9q3 5 0 10" />
            <path d="M21 5.500q5 8.500 0 17M25 2q7.500 12 0 24" stroke="#c4c4c4" />
          </svg>
          <svg viewBox="0 0 32 28" className="h-7 w-8">
            <path d="M10 7h15q3 0 3 3v12q0 3-3 3H4q-3 0-3-3v-8" fill="none" stroke="#1b1b1b" strokeWidth="2" />
            <path d="M29 13h2q1 0 1 3t-1 3h-2z" fill="#1b1b1b" />
            <path d="M12 10h12l1 1v9l-1 2H5l-1-1v-4l6-2z" fill="#1b1b1b" />
            <path d="M6 1 1 11h4l-1 6 6-9H6z" fill="#1b1b1b" />
          </svg>
        </button>
        <button className="ml-8 text-right text-[23px] leading-8">
          <span className="block">2:56 PM</span>
          <span className="block">5/15/2025</span>
        </button>
      </div>
    </footer>
  );
}

export default function App() {
  return (
    <div className="flex h-screen flex-col overflow-hidden bg-white font-['Open_Sans',sans-serif]">
      <TabStrip />
      <Toolbar />
      <BookmarksBar />
      <EditorHeader />
      <Canvas />
      <Breadcrumb />
      <Taskbar />
    </div>
  );
}
